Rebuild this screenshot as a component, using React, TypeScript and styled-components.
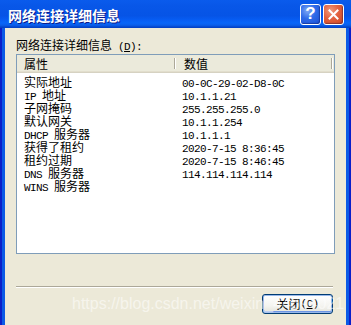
import React from 'react';
import styled, { createGlobalStyle } from 'styled-components';

const GlobalStyle = createGlobalStyle`
  html, body {
    margin: 0;
    padding: 0;
    background: #ece9d8;
  }
  body {
    font-family: "Noto Sans CJK SC", "Noto Sans", sans-serif;
    font-size: 12px;
    color: #000;
  }
`;

const Window = styled.div`
  position: relative;
  width: 351px;
  height: 325px;
  overflow: hidden;
  display: flex;
  flex-direction: column;
  background: #ece9d8;
`;

const TitleBar = styled.div`
  flex: none;
  height: 28px;
  display: flex;
  align-items: center;
  padding: 0 7px 0 8px;
  background: linear-gradient(
    to bottom,
    #0a5bec 0%,
    #0857e8 20%,
    #0654e6 56%,
    #075cf2 70%,
    #0866f8 82%,
    #0a5eea 90%,
    #0448cf 96%,
    #033fc0 100%
  );
`;

const Title = styled.div`
  flex: 1;
  font-size: 14px;
  font-weight: bold;
  color: #fff;
  text-shadow: 1px 1px 0 #0c1c8c;
  line-height: 14px;
  margin-top: 1px;
`;

const CaptionButton = styled.div<{ $kind: 'help' | 'close' }>`
  width: 21px;
  height: 21px;
  box-sizing: border-box;
  margin-left: 2px;
  border: 1px solid #fff;
  border-radius: 3px;
  display: flex;
  align-items: center;
  justify-content: center;
  color: #fff;
  font-family: "Liberation Sans", sans-serif;
  font-weight: bold;
  font-size: 17px;
  background: ${(p) =>
    p.$kind === 'close'
      ? 'radial-gradient(circle at 35% 30%, #f19a7d 0%, #e2613f 45%, #cc4521 100%)'
      : 'radial-gradient(circle at 35% 30%, #7fa9f5 0%, #2e6ae8 45%, #1a4fd4 100%)'};
  box-shadow: inset -1px -1px 1px rgba(0, 0, 60, 0.35);
`;

const Frame = styled.div`
  flex: 1;
  display: flex;
  padding: 0 5px;
  background: linear-gradient(
    to right,
    #0a1fc9 0 2px,
    #0b5ae6 2px 5px,
    #ece9d8 5px calc(100% - 5px),
    #0b5ae6 calc(100% - 5px) calc(100% - 2px),
    #0a1fc9 calc(100% - 2px)
  );
`;

const Body = styled.div`
  flex: 1;
  display: flex;
  flex-direction: column;
  padding: 10px 11px 0 11px;
  background: #ece9d8;
`;

const Label = styled.div`
  height: 14px;
  line-height: 14px;
  margin-bottom: 2px;
`;

const Latin = styled.span`
  font-family: "Liberation Mono", monospace;
  font-size: 11px;
  letter-spacing: -0.6px;
`;

const Accel = styled.span`
  text-decoration: underline;
`;

const ListBox = styled.div`
  height: 200px;
  box-sizing: border-box;
  border: 1px solid #7f9db9;
  background: #fff;
  display: flex;
  flex-direction: column;
`;

const Header = styled.div`
  height: 18px;
  display: grid;
  grid-template-columns: 158px 157px 1fr;
  background: #ebeadb;
  box-shadow: inset 0 -1px 0 #d6d2c2, inset 0 -2px 0 #e2decd;
`;

const HeaderCell = styled.div<{ $pad: number }>`
  position: relative;
  padding-left: ${(p) => p.$pad}px;
  line-height: 17px;
  &::after {
    content: '';
    position: absolute;
    right: 0;
    top: 3px;
    bottom: 4px;
    width: 1px;
    background: #aca899;
    box-shadow: 1px 0 0 #fff;
  }
`;

const Rows = styled.div`
  padding-top: 2px;
`;

const Row = styled.div`
  height: 13px;
  display: grid;
  grid-template-columns: 158px 1fr;
  line-height: 13px;
  white-space: nowrap;
`;

const Cell = styled.div`
  padding-left: 7px;
`;

const Separator = styled.div`
  margin: 32px 2px 0 0;
  height: 1px;
  background: #aca899;
  box-shadow: 0 1px 0 #fff;
`;

const Footer = styled.div`
  display: flex;
  justify-content: flex-end;
  padding: 7px 2px 0 0;
`;

const Button = styled.div`
  width: 71px;
  height: 20px;
  box-sizing: border-box;
  border: 1px solid #003c74;
  border-radius: 3px;
  background: linear-gradient(to bottom, #fff 0%, #f4f4f0 60%, #e3e2da 100%);
  box-shadow: inset 0 0 0 1px #98b8ea, inset 0 -1px 0 1px #6d95e4;
  display: flex;
  align-items: center;
  justify-content: center;
  line-height: 14px;
`;

const Watermark = styled.div`
  position: absolute;
  left: 72px;
  top: 295px;
  font-family: "Liberation Sans", Arial, sans-serif;
  font-size: 16px;
  color: rgba(255, 255, 255, 0.55);
  white-space: nowrap;
  pointer-events: none;
`;

const mixed = (text: string) =>
  text
    .split(/([\x20-\x7e]+)/)
    .filter(Boolean)
    .map((part, i) =>
      /^[\x20-\x7e]+$/.test(part) ? <Latin key={i}>{part}</Latin> : <span key={i}>{part}</span>
    );

const details: [string, string][] = [
  ['实际地址', '00-0C-29-02-D8-0C'],
  ['IP 地址', '10.1.1.21'],
  ['子网掩码', '255.255.255.0'],
  ['默认网关', '10.1.1.254'],
  ['DHCP 服务器', '10.1.1.1'],
  ['获得了租约', '2020-7-15 8:36:45'],
  ['租约过期', '2020-7-15 8:46:45'],
  ['DNS 服务器', '114.114.114.114'],
  ['WINS 服务器', ''],
];

const CloseGlyph = () => (
  <svg width="11" height="11" viewBox="0 0 11 11">
    <path d="M1.5 1.5 L9.5 9.5 M9.5 1.5 L1.5 9.5" stroke="#fff" strokeWidth="2" strokeLinecap="square" />
  </svg>
);

export default function App() {
  return (
    <>
      <GlobalStyle />
      <Window>
        <TitleBar>
          <Title>网络连接详细信息</Title>
          <CaptionButton $kind="help">?</CaptionButton>
          <CaptionButton $kind="close">
            <CloseGlyph />
          </CaptionButton>
        </TitleBar>
        <Frame>
          <Body>
            <Label>
              网络连接详细信息
              <Latin>
                {' ('}
                <Accel>D</Accel>
                {'):'}
              </Latin>
            </Label>
            <ListBox>
              <Header>
                <HeaderCell $pad={7}>属性</HeaderCell>
                <HeaderCell $pad={9}>数值</HeaderCell>
              </Header>
              <Rows>
                {details.map(([name, value]) => (
                  <Row key={name}>
                    <Cell>{mixed(name)}</Cell>
                    <Cell>
                      <Latin>{value}</Latin>
                    </Cell>
                  </Row>
                ))}
              </Rows>
            </ListBox>
            <Separator />
            <Footer>
              <Button>
                关闭
                <Latin>
                  (<Accel>C</Accel>)
                </Latin>
              </Button>
            </Footer>
          </Body>
        </Frame>
        <Watermark>https://blog.csdn.net/weixin_44694021</Watermark>
      </Window>
    </>
  );
}
